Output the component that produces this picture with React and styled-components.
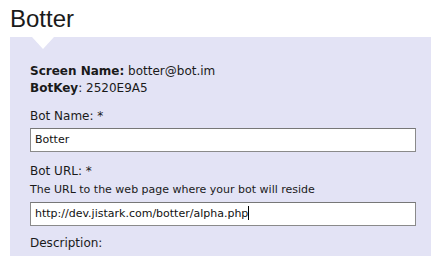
import React from "react";
import styled, { createGlobalStyle } from "styled-components";

const Global = createGlobalStyle`
    body {
        margin: 0;
        background: #fff;
        font-family: "DejaVu Sans", Verdana, sans-serif;
        color: #1a1a1a;
    }
`;

const Page = styled.div`
    width: 431px;
    height: 256px;
    overflow: hidden;
`;

const Title = styled.h1`
    margin: 0;
    padding: 6px 0 0 10px;
    height: 31px;
    box-sizing: border-box;
    font-family: "Liberation Sans", Arial, sans-serif;
    font-weight: normal;
    font-size: 24px;
    line-height: 26px;
    color: #1a1a1a;
`;

const Panel = styled.div`
    position: relative;
    margin-left: 10px;
    margin-top: 6px;
    background: #e3e3f5;
    padding: 26px 15px 20px 20px;
    height: 300px;
    &::before {
        content: "";
        position: absolute;
        top: 0;
        left: 22px;
        border-left: 11px solid transparent;
        border-right: 11px solid transparent;
        border-top: 12px solid #fff;
    }
`;

const Info = styled.div`
    font-size: 12px;
    line-height: 17px;
    margin-bottom: 11px;
    b {
        font-weight: bold;
    }
`;

const Group = styled.div`
    margin-bottom: ${(p) => p.$gap || 11}px;
`;

const Label = styled.div`
    font-size: 12px;
    line-height: 17px;
    margin-bottom: ${(p) => (p.$tight ? "2px" : "3px")};
`;

const Hint = styled.div`
    font-size: 11px;
    line-height: 15px;
    margin-bottom: 5px;
`;

const Field = styled.div`
    box-sizing: border-box;
    height: 24px;
    border: 1px solid #8a8a8a;
    border-top-color: #777;
    background: #fff;
    padding: 0 4px;
    font-size: 11px;
    line-height: 22px;
    color: #111;
    white-space: nowrap;
`;

const Caret = styled.span`
    display: inline-block;
    width: 1px;
    height: 14px;
    background: #000;
    vertical-align: -3px;
`;

const App = () => {
    return (
        <>
            <Global />
            <Page>
                <Title>Botter</Title>
                <Panel>
                    <Info>
                        <div>
                            <b>Screen Name:</b> botter@bot.im
                        </div>
                        <div>
                            <b>BotKey</b>: 2520E9A5
                        </div>
                    </Info>
                    <Group>
                        <Label>Bot Name: *</Label>
                        <Field>Botter</Field>
                    </Group>
                    <Group $gap={9}>
                        <Label $tight>Bot URL: *</Label>
                        <Hint>The URL to the web page where your bot will reside</Hint>
                        <Field>
                            http://dev.jistark.com/botter/alpha.php
                            <Caret />
                        </Field>
                    </Group>
                    <Group>
                        <Label>Description:</Label>
                    </Group>
                </Panel>
            </Page>
        </>
    );
};

export default App;
